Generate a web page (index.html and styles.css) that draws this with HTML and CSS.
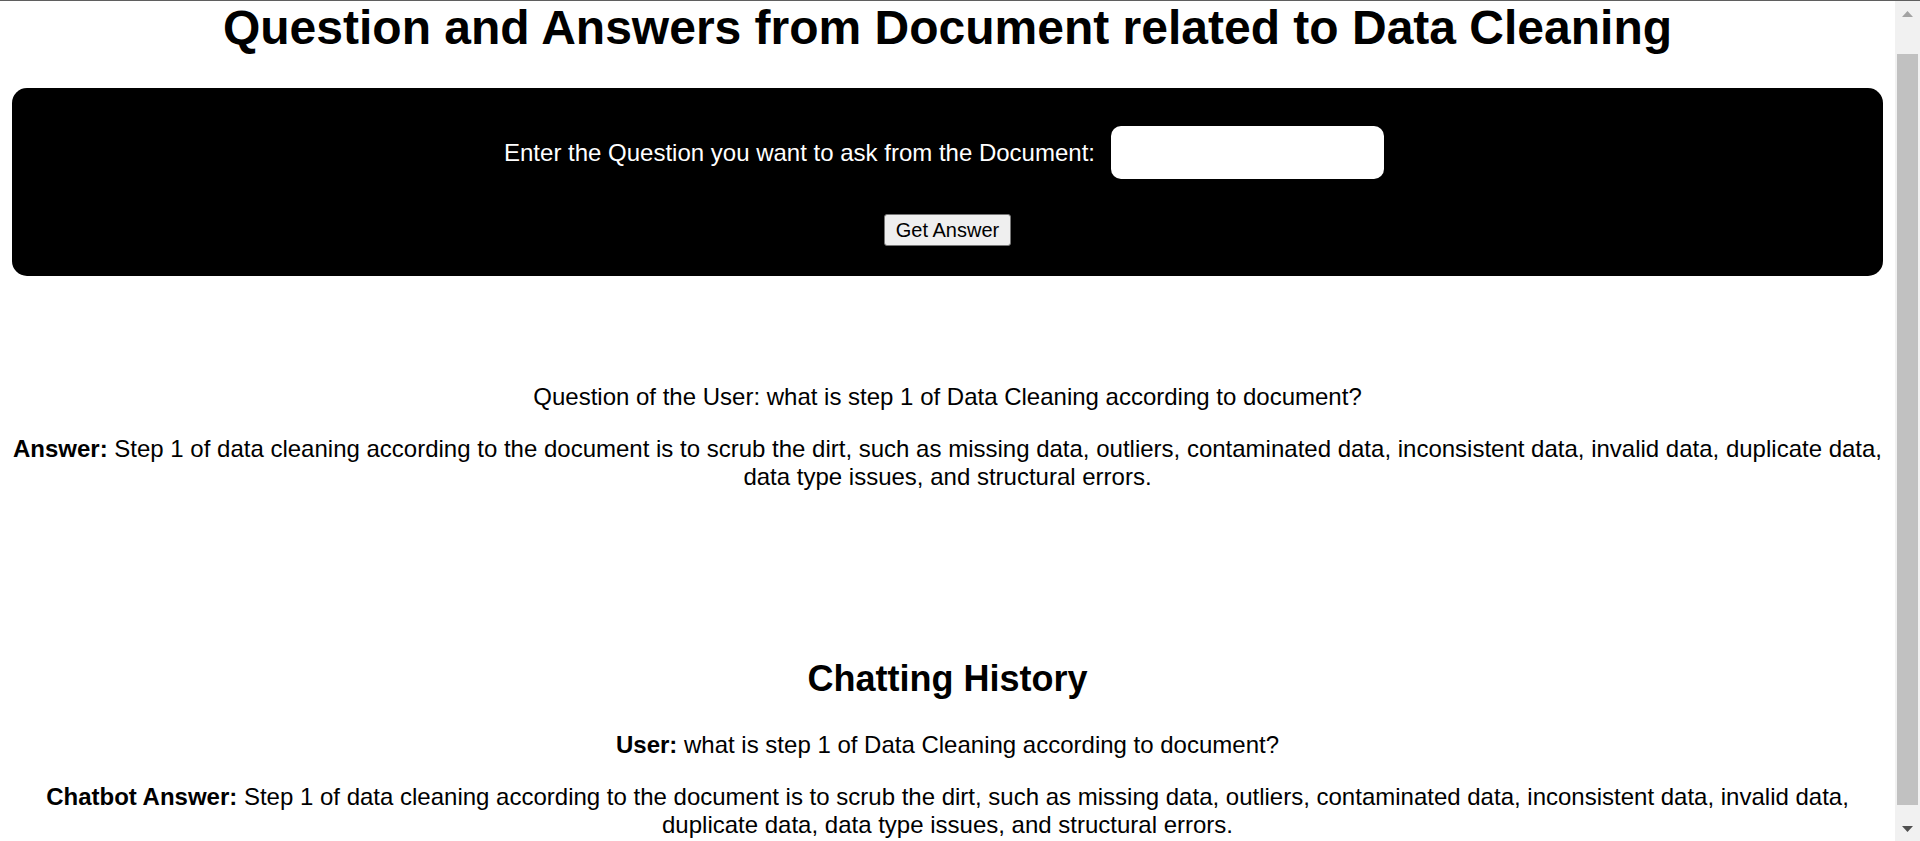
FILE: index.html
```html
<!DOCTYPE html>
<html lang="en">
<head>
<meta charset="utf-8">
<title>Question and Answers from Document related to Data Cleaning</title>
<link rel="stylesheet" href="styles.css">
</head>
<body>
<main class="page">
  <h1 class="title">Question and Answers from Document related to Data Cleaning</h1>
  <form class="ask-box">
    <div class="ask-row">
      <label class="ask-label" for="question">Enter the Question you want to ask from the Document:</label>
      <input class="ask-input" type="text" id="question" name="question">
    </div>
    <button class="ask-button" type="button">Get Answer</button>
  </form>

  <section class="result">
    <p class="line">Question of the User: what is step 1 of Data Cleaning according to document?</p>
    <p class="line"><b>Answer:</b> Step 1 of data cleaning according to the document is to scrub the dirt, such as missing data, outliers, contaminated data, inconsistent data, invalid data, duplicate data, data type issues, and structural errors.</p>
  </section>

  <section class="history">
    <h2 class="history-title">Chatting History</h2>
    <p class="line"><b>User:</b> what is step 1 of Data Cleaning according to document?</p>
    <p class="line"><b>Chatbot Answer:</b> Step 1 of data cleaning according to the document is to scrub the dirt, such as missing data, outliers, contaminated data, inconsistent data, invalid data, duplicate data, data type issues, and structural errors.</p>
  </section>
</main>
<div class="scrollbar" aria-hidden="true">
  <div class="sb-arrow"><svg width="11" height="6" viewBox="0 0 11 6"><path d="M0 6 L5.5 0 L11 6 Z" fill="#a3a3a3"/></svg></div>
  <div class="sb-track"><div class="sb-thumb"></div></div>
  <div class="sb-arrow"><svg width="11" height="6" viewBox="0 0 11 6"><path d="M0 0 L5.5 6 L11 0 Z" fill="#505050"/></svg></div>
</div>
</body>
</html>
```

FILE: styles.css
```css
html, body {
  margin: 0;
  padding: 0;
  height: 841px;
  overflow: hidden;
}

body {
  display: flex;
  box-sizing: border-box;
  border-top: 1px solid #5f5f5f;
  background: #ffffff;
  color: #000000;
  font-family: "Liberation Sans", Arial, sans-serif;
  font-size: 24px;
}

.page {
  flex: 1;
  min-width: 0;
  padding: 0 12px;
  overflow: hidden;
  text-align: center;
}

.title {
  margin: -1px 0 33px;
  font-size: 48px;
  font-weight: bold;
  line-height: normal;
}

.ask-box {
  display: flex;
  flex-direction: column;
  align-items: center;
  gap: 35px;
  margin: 0;
  padding: 38px 0 30px;
  background: #000000;
  border-radius: 15px;
}

.ask-row {
  display: flex;
  align-items: center;
  gap: 16px;
  height: 53px;
}

.ask-label {
  color: #ffffff;
  font-size: 24px;
}

.ask-input {
  box-sizing: border-box;
  width: 273px;
  height: 53px;
  margin: 0 7px 0 0;
  padding: 0 12px;
  border: none;
  border-radius: 10px;
  background: #ffffff;
  font-family: "Liberation Sans", Arial, sans-serif;
  font-size: 20px;
}

.ask-button {
  box-sizing: border-box;
  height: 32px;
  padding: 0 10.5px;
  border: 1.5px solid #767676;
  border-radius: 3px;
  background: #efefef;
  color: #000000;
  font-family: "Liberation Sans", Arial, sans-serif;
  font-size: 20px;
  line-height: 1;
}

.result {
  margin-top: 107px;
}

.line {
  margin: 0 0 24px;
  line-height: normal;
}

.result .line:last-child {
  margin-bottom: 0;
}

.history {
  margin-top: 167px;
}

.history-title {
  margin: 0 0 31px;
  font-size: 36px;
  font-weight: bold;
  line-height: normal;
}

.scrollbar {
  flex: 0 0 25px;
  display: flex;
  flex-direction: column;
  background: #f1f1f1;
}

.sb-arrow {
  flex: 0 0 25px;
  display: flex;
  align-items: center;
  justify-content: center;
}

.sb-track {
  flex: 1;
  padding: 28px 2px 10px;
}

.sb-thumb {
  height: 751px;
  background: #c1c1c1;
}
```
